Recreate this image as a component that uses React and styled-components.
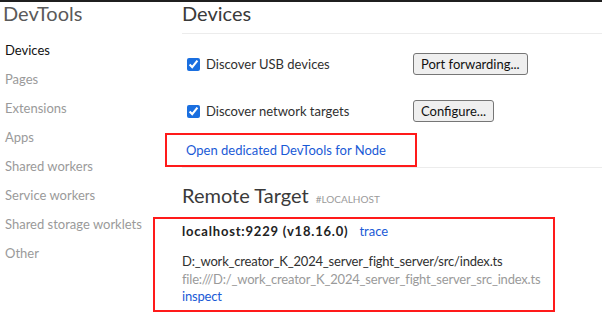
import React from 'react';
import styled, { createGlobalStyle } from 'styled-components';

const GlobalStyle = createGlobalStyle`
  html, body {
    margin: 0;
    padding: 0;
    background: #ffffff;
  }
  body {
    font-family: Lato, "Liberation Sans", sans-serif;
    font-size: 13px;
    color: #303030;
  }
`;

const Page = styled.div`
  display: flex;
  min-height: 315px;
  border-top: 2px solid #1f1f1f;
  overflow: hidden;
`;

const Sidebar = styled.nav`
  width: 182px;
  flex-shrink: 0;
`;

const Title = styled.div`
  font-size: 20px;
  line-height: 22px;
  color: #5a5a5a;
  padding-left: 3px;
  margin-bottom: 12px;
`;

const NavItem = styled.div`
  height: 29px;
  line-height: 29px;
  padding-left: 5px;
  color: ${({ active }) => (active ? '#111111' : '#9a9a9a')};
`;

const Main = styled.main`
  flex: 1;
  min-width: 0;
`;

const Heading = styled.h2`
  margin: 0;
  height: 22px;
  font-size: 20px;
  font-weight: normal;
  line-height: 22px;
  color: #3a3a3a;
  display: flex;
  align-items: baseline;
  gap: 7px;
`;

const Tag = styled.span`
  font-size: 10px;
  line-height: 1;
  color: #9a9a9a;
  text-transform: uppercase;
`;

const Rule = styled.div`
  height: 1px;
  background: #ececec;
  margin-top: ${({ top }) => top}px;
  margin-bottom: ${({ bottom }) => bottom || 0}px;
`;

const OptionRow = styled.div`
  display: flex;
  align-items: center;
  height: 22px;
  margin-top: ${({ top }) => top}px;
`;

const CheckLabel = styled.label`
  display: flex;
  align-items: center;
  width: 231px;
  padding-left: 5px;
  box-sizing: border-box;
  gap: 6px;

  input {
    width: 13px;
    height: 13px;
    margin: 0;
    accent-color: #1a6fe0;
  }
`;

const Button = styled.button`
  font: inherit;
  height: 22px;
  padding: 0 7px;
  background: #efefef;
  color: #111;
  border: 1px solid #767676;
  border-radius: 3px;
`;

const Callout = styled.div`
  border: 2px solid #ff1a1a;
  margin-left: ${({ offset }) => -offset}px;
  padding-left: ${({ inset }) => inset}px;
  box-sizing: border-box;
  width: ${({ w }) => w}px;
`;

const LinkBox = styled(Callout)`
  margin-top: 11px;
  height: 34px;
  display: flex;
  align-items: center;
`;

const Link = styled.a`
  color: #1a5ad6;
  text-decoration: none;
  cursor: pointer;
`;

const TargetBox = styled(Callout)`
  margin-top: 11px;
  padding-top: 4px;
  padding-bottom: 4px;
`;

const TargetHead = styled.div`
  display: flex;
  gap: 11px;
  line-height: 17px;
  margin-bottom: 13px;
`;

const TargetName = styled.span`
  font-weight: bold;
  letter-spacing: 0.8px;
  color: #222;
`;

const Line = styled.div`
  line-height: 17.5px;
  letter-spacing: -0.2px;
  color: ${({ muted }) => (muted ? '#9a9a9a' : '#303030')};
  white-space: nowrap;
`;

const navItems = [
  'Devices',
  'Pages',
  'Extensions',
  'Apps',
  'Shared workers',
  'Service workers',
  'Shared storage worklets',
  'Other',
];

const App = () => {
  return (
    <>
      <GlobalStyle />
      <Page>
        <Sidebar>
          <Title>DevTools</Title>
          {navItems.map((item, i) => (
            <NavItem key={item} active={i === 0}>
              {item}
            </NavItem>
          ))}
        </Sidebar>
        <Main>
          <Heading>Devices</Heading>
          <Rule top={9} />
          <OptionRow top={19}>
            <CheckLabel>
              <input type="checkbox" defaultChecked />
              Discover USB devices
            </CheckLabel>
            <Button>Port forwarding...</Button>
          </OptionRow>
          <OptionRow top={25}>
            <CheckLabel>
              <input type="checkbox" defaultChecked />
              Discover network targets
            </CheckLabel>
            <Button>Configure...</Button>
          </OptionRow>
          <LinkBox offset={17} inset={19} w={252}>
            <Link>Open dedicated DevTools for Node</Link>
          </LinkBox>
          <Rule top={0} bottom={16} />
          <Heading>
            Remote Target <Tag>#localhost</Tag>
          </Heading>
          <TargetBox offset={29} inset={27} w={402}>
            <TargetHead>
              <TargetName>localhost:9229 (v18.16.0)</TargetName>
              <Link>trace</Link>
            </TargetHead>
            <Line>D:_work_creator_K_2024_server_fight_server/src/index.ts</Line>
            <Line muted>file:///D:/_work_creator_K_2024_server_fight_server_src_index.ts</Line>
            <Line>
              <Link>inspect</Link>
            </Line>
          </TargetBox>
        </Main>
      </Page>
    </>
  );
};

export default App;
